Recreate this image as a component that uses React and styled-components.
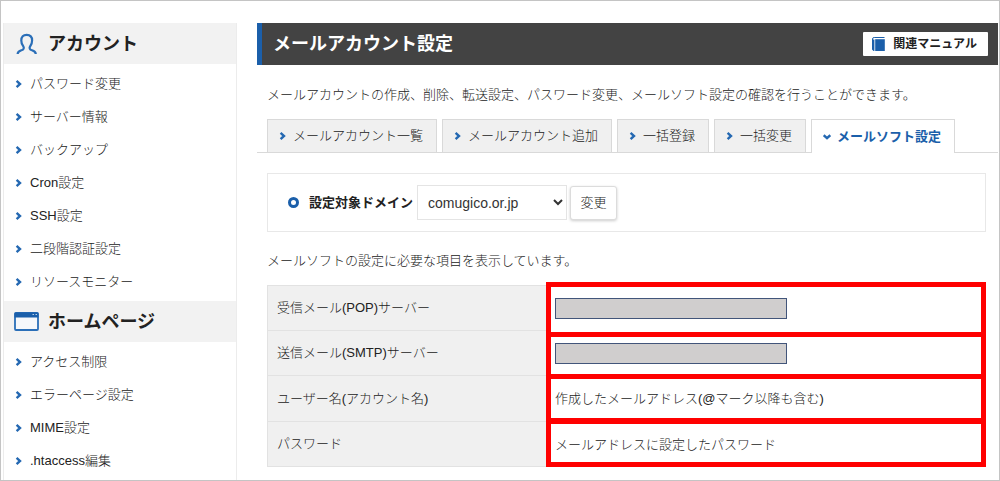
import React from "react";
import styled, { createGlobalStyle, css } from "styled-components";

const BLUE = "#1b5faa";

const GlobalStyle = createGlobalStyle`
  *, *::before, *::after { box-sizing: border-box; }
  body {
    margin: 0;
    background: #fff;
    color: #222;
    font-family: "Liberation Sans", "Noto Sans CJK JP", sans-serif;
    font-size: 13px;
    font-weight: 300;
    line-height: 20px;
  }
  h1, h2, p, ul { margin: 0; padding: 0; }
  a { color: inherit; text-decoration: none; }
`;

const Frame = styled.div`
  display: flex;
  align-items: flex-start;
  gap: 20px;
  height: 100vh;
  overflow: hidden;
  border: 1px solid #c4c4c4;
  padding: 22px 1px 0 2px;
`;

const Sidebar = styled.nav`
  flex: 0 0 234px;
  border: 1px solid #ececec;
  border-width: 0 1px;
`;

const SideHeading = styled.h2`
  display: flex;
  align-items: center;
  height: 41px;
  padding-left: 10px;
  gap: 9px;
  background: #f2f2f2;
  color: #222;
  font-size: 18px;
  font-weight: 700;

  svg { flex: 0 0 25px; }
`;

const SideList = styled.ul`
  list-style: none;
  padding: 3px 0 3px 11px;
`;

const SideLink = styled.a`
  display: flex;
  align-items: center;
  gap: 7px;
  height: 33px;
`;

const Main = styled.main`
  flex: 1;
  min-width: 0;
`;

const TitleBar = styled.header`
  display: flex;
  align-items: center;
  justify-content: space-between;
  height: 42px;
  padding: 0 10px 0 11px;
  border-left: 5px solid ${BLUE};
  background: #434343;
  color: #fff;

  h1 { font-size: 18px; font-weight: 700; }
`;

const ManualButton = styled.button`
  display: flex;
  align-items: center;
  gap: 8px;
  height: 24px;
  padding: 0 11px 0 9px;
  border: 0;
  border-radius: 1px;
  background: #fff;
  color: #222;
  font: inherit;
  font-size: 12px;
  font-weight: 700;
`;

const Lead = styled.p`
  padding: 20px 10px 0;
`;

const Tabs = styled.nav`
  display: flex;
  gap: 5px;
  margin-top: 14px;
  padding: 0 10px;
  border-bottom: 1px solid #d9d9d9;
`;

const Tab = styled.a`
  display: flex;
  align-items: center;
  gap: 6px;
  height: 33px;
  padding: 0 13px 0 11px;
  border: 1px solid #d9d9d9;
  border-bottom: 0;
  background: #f0f0f0;

  ${(p) => p.$active && css`
    height: 34px;
    margin-bottom: -1px;
    background: #fff;
    color: ${BLUE};
    font-weight: 700;
  `}
`;

const Content = styled.div`
  padding: 20px 12px 0 10px;
`;

const DomainForm = styled.form`
  display: flex;
  align-items: center;
  height: 59px;
  padding-left: 20px;
  margin-bottom: 19px;
  border: 1px solid #e8e8e8;

  label { margin: 0 4px 0 10px; color: #222; font-weight: 700; }
`;

const Ring = styled.span`
  width: 11px;
  height: 11px;
  border: 3px solid ${BLUE};
  border-radius: 50%;
`;

const Select = styled.select`
  width: 150px;
  height: 35px;
  padding: 0 0 0 6px;
  border: 1px solid #e4e4e4;
  border-radius: 0;
  background-color: #fff;
  color: #333;
  font-family: inherit;
  font-size: 14px;
`;

const SubmitButton = styled.button`
  width: 47px;
  height: 34px;
  margin-left: 3px;
  padding: 0;
  border: 1px solid #dcdcdc;
  border-radius: 3px;
  background: #fff;
  box-shadow: 0 1px 3px rgba(0, 0, 0, 0.2);
  color: inherit;
  font: inherit;
`;

const Settings = styled.table`
  width: 100%;
  margin-top: 14px;
  border-spacing: 0;
  border-collapse: separate;

  th, td {
    height: 46px;
    padding: 0 9px;
    text-align: left;
    font-weight: 300;
  }
  tr:nth-child(even) > * { height: 45px; }
  th {
    width: 279px;
    border: 1px solid #e2e2e2;
    border-width: 0 0 1px 1px;
    background: #f0f0f0;
  }
  tr:first-child th { border-top-width: 1px; }
  td { position: relative; }
`;

const Highlight = styled.span`
  position: absolute;
  top: ${(p) => p.$top}px;
  bottom: ${(p) => p.$bottom}px;
  left: 0;
  right: 0;
  border: 5px solid #f00;
  pointer-events: none;
`;

const Masked = styled.span`
  display: block;
  width: 232px;
  height: 21px;
  border: 1px solid #42557a;
  background: #d0cece;
`;

const Chevron = ({ down }) => (
  <svg width="8" height="8" viewBox="0 0 8 8" fill="none" stroke="#2468b2" strokeWidth="2.4" aria-hidden="true">
    <path d={down ? "M0.7 2.2L4 5.2L7.3 2.2" : "M1.6 0.9L5 4L1.6 7.1"} />
  </svg>
);

const PersonIcon = () => (
  <svg width="25" height="22" viewBox="0 0 25 22" fill="none" stroke="#2b6fb8" strokeWidth="2.2" aria-hidden="true">
    <path d="M3.6 21C3.8 18.8 5.2 18 7.4 17.3C9.8 16.5 10.4 14.8 9.2 13.2C7.8 11.4 7.3 9.8 7.3 7.4C7.3 3.6 9.2 1.8 12.7 1.8C16.2 1.8 18.1 3.6 18.1 7.4C18.1 9.8 17.6 11.4 16.2 13.2C15 14.8 15.6 16.5 18 17.3C20.2 18 21.6 18.8 21.8 21" />
  </svg>
);

const WindowIcon = () => (
  <svg width="25" height="19" viewBox="0 0 25 19" aria-hidden="true">
    <rect x="1" y="1" width="23" height="17" rx="1" fill="#f6f8fb" stroke="#2b6fb8" strokeWidth="1.8" />
    <path d="M0.5 1.5Q0.5 0.5 1.5 0.5H23.5Q24.5 0.5 24.5 1.5V5.5H0.5Z" fill={BLUE} />
    <path d="M18.5 2.5H20M21.5 2.5H23" stroke="#b9d0e8" strokeWidth="1" />
  </svg>
);

const BookIcon = () => (
  <svg width="13" height="14" viewBox="0 0 13 14" aria-hidden="true">
    <path d="M12.5 0.5H2.2Q0.5 0.5 0.5 2V12Q0.5 13.5 2.2 13.5" fill="none" stroke={BLUE} />
    <path d="M0.5 2.5H2.4V13.8Q0.5 13.6 0.5 12Z" fill={BLUE} />
    <path d="M3.2 2.2H12.8V14H3.2Z" fill={BLUE} />
  </svg>
);

const sections = [
  {
    title: "アカウント",
    icon: <PersonIcon />,
    items: ["パスワード変更", "サーバー情報", "バックアップ", "Cron設定", "SSH設定", "二段階認証設定", "リソースモニター"],
  },
  {
    title: "ホームページ",
    icon: <WindowIcon />,
    items: ["アクセス制限", "エラーページ設定", "MIME設定", ".htaccess編集"],
  },
];

const tabs = ["メールアカウント一覧", "メールアカウント追加", "一括登録", "一括変更", "メールソフト設定"];
const activeTab = "メールソフト設定";

const rows = [
  { label: "受信メール(POP)サーバー", top: -3, bottom: -6 },
  { label: "送信メール(SMTP)サーバー", top: 1, bottom: -3 },
  { label: "ユーザー名(アカウント名)", value: "作成したメールアドレス(@マーク以降も含む)", top: -2, bottom: -1 },
  { label: "パスワード", value: "メールアドレスに設定したパスワード", top: -3, bottom: 0 },
];

export default function App() {
  return (
    <>
      <GlobalStyle />
      <Frame lang="ja">
        <Sidebar>
          {sections.map((s) => (
            <section key={s.title}>
              <SideHeading>{s.icon}{s.title}</SideHeading>
              <SideList>
                {s.items.map((item) => (
                  <li key={item}>
                    <SideLink href="#"><Chevron />{item}</SideLink>
                  </li>
                ))}
              </SideList>
            </section>
          ))}
        </Sidebar>
        <Main>
          <TitleBar>
            <h1>メールアカウント設定</h1>
            <ManualButton type="button"><BookIcon />関連マニュアル</ManualButton>
          </TitleBar>
          <Lead>メールアカウントの作成、削除、転送設定、パスワード変更、メールソフト設定の確認を行うことができます。</Lead>
          <Tabs>
            {tabs.map((t) => (
              <Tab key={t} href="#" $active={t === activeTab}>
                <Chevron down={t === activeTab} />{t}
              </Tab>
            ))}
          </Tabs>
          <Content>
            <DomainForm>
              <Ring />
              <label htmlFor="domain">設定対象ドメイン</label>
              <Select id="domain" defaultValue="comugico.or.jp">
                <option>comugico.or.jp</option>
              </Select>
              <SubmitButton type="button">変更</SubmitButton>
            </DomainForm>
            <p>メールソフトの設定に必要な項目を表示しています。</p>
            <Settings>
              <tbody>
                {rows.map((r) => (
                  <tr key={r.label}>
                    <th scope="row">{r.label}</th>
                    <td>
                      {r.value || <Masked />}
                      <Highlight $top={r.top} $bottom={r.bottom} />
                    </td>
                  </tr>
                ))}
              </tbody>
            </Settings>
          </Content>
        </Main>
      </Frame>
    </>
  );
}
